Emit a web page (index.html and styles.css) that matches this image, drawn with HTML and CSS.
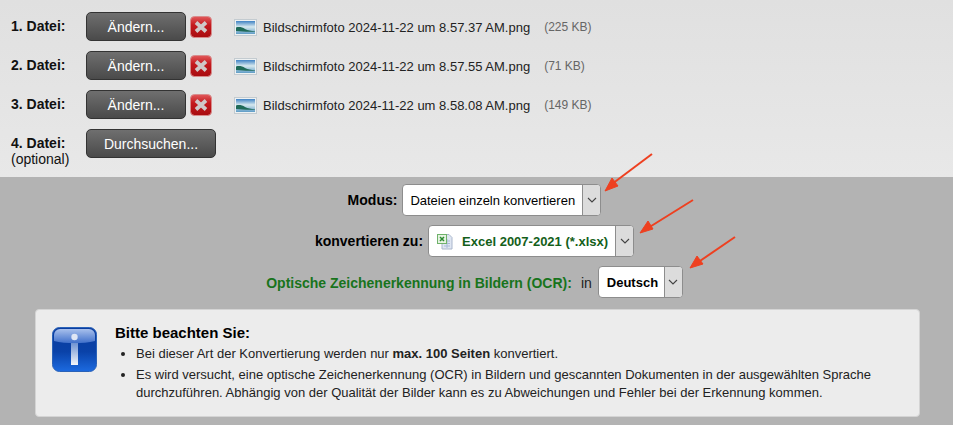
FILE: index.html
```html
<!DOCTYPE html>
<html lang="de">
<head>
<meta charset="utf-8">
<title>Datei-Konvertierung</title>
<link rel="stylesheet" href="styles.css">
</head>
<body>
<svg class="defs" width="0" height="0" aria-hidden="true">
  <defs>
    <linearGradient id="redg" x1="0" y1="0" x2="0" y2="1">
      <stop offset="0" stop-color="#e25a5c"/><stop offset=".4" stop-color="#c41a1e"/><stop offset="1" stop-color="#a80c10"/>
    </linearGradient>
    <linearGradient id="sky" x1="0" y1="0" x2="0" y2="1">
      <stop offset="0" stop-color="#3f82c4"/><stop offset=".45" stop-color="#d6e8ee"/><stop offset="1" stop-color="#5f9cc6"/>
    </linearGradient>
    <linearGradient id="blue" x1="0" y1="0" x2="0" y2="1">
      <stop offset="0" stop-color="#0a3c9e"/><stop offset=".55" stop-color="#0a42a8"/><stop offset="1" stop-color="#1c6ae0"/>
    </linearGradient>
    <linearGradient id="gloss" x1="0" y1="0" x2="0" y2="1">
      <stop offset="0" stop-color="#a8c0ec"/><stop offset="1" stop-color="#3f6fca"/>
    </linearGradient>
    <linearGradient id="ibar" x1="0" y1="0" x2="0" y2="1">
      <stop offset="0" stop-color="#6f93d2"/><stop offset="1" stop-color="#f4f6fa"/>
    </linearGradient>
    <symbol id="del" viewBox="0 0 22 22">
      <rect x=".5" y=".5" width="21" height="21" rx="4" fill="url(#redg)" stroke="#d88c8c"/>
      <path d="M6 6.500l10 9M16 6.500l-10 9" stroke="#cfc8c8" stroke-width="3.800"/>
    </symbol>
    <symbol id="pic" viewBox="0 0 23 17">
      <rect x=".5" y=".5" width="22" height="16" fill="#eef1f2" stroke="#c3cbd0"/>
      <rect x="2" y="2" width="19" height="13" fill="url(#sky)"/>
      <path d="M2 8.500c3-1 6-.5 9 1.500 3 1.500 6 2 10 2v.5c-6 .5-13 0-19-.5z" fill="#1f6a58"/>
    </symbol>
  </defs>
</svg>

<main class="page">
  <section class="files">
    <div class="file-row">
      <div class="file-label"><b>1. Datei:</b></div>
      <button class="btn btn-change" type="button">Ändern...</button>
      <svg class="del"><use href="#del"/></svg>
      <svg class="pic"><use href="#pic"/></svg>
      <span class="fname">Bildschirmfoto 2024-11-22 um 8.57.37 AM.png</span>
      <span class="fsize">(225 KB)</span>
    </div>
    <div class="file-row">
      <div class="file-label"><b>2. Datei:</b></div>
      <button class="btn btn-change" type="button">Ändern...</button>
      <svg class="del"><use href="#del"/></svg>
      <svg class="pic"><use href="#pic"/></svg>
      <span class="fname">Bildschirmfoto 2024-11-22 um 8.57.55 AM.png</span>
      <span class="fsize">(71 KB)</span>
    </div>
    <div class="file-row">
      <div class="file-label"><b>3. Datei:</b></div>
      <button class="btn btn-change" type="button">Ändern...</button>
      <svg class="del"><use href="#del"/></svg>
      <svg class="pic"><use href="#pic"/></svg>
      <span class="fname">Bildschirmfoto 2024-11-22 um 8.58.08 AM.png</span>
      <span class="fsize">(149 KB)</span>
    </div>
    <div class="file-row">
      <div class="file-label"><b>4. Datei:</b><br>(optional)</div>
      <button class="btn btn-browse" type="button">Durchsuchen...</button>
    </div>
  </section>

  <section class="options">
    <div class="opt-row">
      <span class="opt-label">Modus:</span>
      <div class="select select-mode">
        <span class="select-value">Dateien einzeln konvertieren</span>
        <span class="select-arrow"><svg width="10" height="6" viewBox="0 0 10 6"><path d="M1 1l4 4 4-4" fill="none" stroke="#444" stroke-width="1.100"/></svg></span>
      </div>
    </div>
    <div class="opt-row">
      <span class="opt-label">konvertieren zu:</span>
      <div class="select select-format">
        <span class="select-value">
          <svg class="xls" width="16" height="17" viewBox="0 0 16 17">
            <path d="M5 1.500h7l3 3v11.500H5z" fill="#dfe6f2" stroke="#aab7cc"/>
            <path d="M7 8h6M7 10.500h6M7 13h6M10 6v9" stroke="#a9bbd8"/>
            <rect x=".5" y="1.500" width="9" height="9" fill="#e6f3e2" stroke="#6fb26a"/>
            <path d="M3 4l4 4M7 4l-4 4" stroke="#2c8a33" stroke-width="1.500"/>
          </svg>
          <b class="green-dark">Excel 2007-2021 (*.xlsx)</b>
        </span>
        <span class="select-arrow"><svg width="10" height="6" viewBox="0 0 10 6"><path d="M1 1l4 4 4-4" fill="none" stroke="#444" stroke-width="1.100"/></svg></span>
      </div>
    </div>
    <div class="opt-row opt-row-ocr">
      <b class="ocr-label">Optische Zeichenerkennung in Bildern (OCR):</b>
      <span class="ocr-in">in</span>
      <div class="select select-lang">
        <span class="select-value"><b>Deutsch</b></span>
        <span class="select-arrow"><svg width="10" height="6" viewBox="0 0 10 6"><path d="M1 1l4 4 4-4" fill="none" stroke="#444" stroke-width="1.100"/></svg></span>
      </div>
    </div>

    <aside class="notice">
      <svg class="info" width="45" height="45" viewBox="0 0 45 45">
        <rect x=".5" y=".5" width="44" height="44" rx="7" fill="url(#blue)" stroke="#2a62b8"/>
        <path d="M2 8a6 6 0 0 1 6-6h29a6 6 0 0 1 6 6v6c-12 3-29 3-41 0z" fill="url(#gloss)"/>
        <circle cx="22.500" cy="10" r="3.200" fill="#dfe6f4"/>
        <rect x="19" y="16" width="7" height="22" fill="url(#ibar)"/>
      </svg>
      <div class="notice-body">
        <h2 class="notice-title">Bitte beachten Sie:</h2>
        <ul class="notice-list">
          <li>Bei dieser Art der Konvertierung werden nur <b>max. 100 Seiten</b> konvertiert.</li>
          <li>Es wird versucht, eine optische Zeichenerkennung (OCR) in Bildern und gescannten Dokumenten in der ausgewählten Sprache durchzuführen. Abhängig von der Qualität der Bilder kann es zu Abweichungen und Fehler bei der Erkennung kommen.</li>
        </ul>
      </div>
    </aside>

    <svg class="arrows" width="953" height="425" viewBox="0 0 953 425" aria-hidden="true">
      <g fill="#ee4020" stroke="#ee4020">
        <path d="M652 154L612 184" stroke-width="2" fill="none"/>
        <path d="M605 191l7-13 6 8z" stroke-width="1"/>
        <path d="M693 200L648 228" stroke-width="2" fill="none"/>
        <path d="M640 233l8-12 5 8z" stroke-width="1"/>
        <path d="M735 237L697 263" stroke-width="2" fill="none"/>
        <path d="M690 268l7-12 6 8z" stroke-width="1"/>
      </g>
    </svg>
  </section>
</main>
</body>
</html>
```
FILE: styles.css
```css
* { box-sizing: border-box; }
html, body { margin: 0; padding: 0; }
body {
  width: 953px;
  height: 425px;
  overflow: hidden;
  background: #b3b3b3;
  color: #000;
  font-family: "Liberation Sans", Arial, sans-serif;
  font-size: 13px;
}
.defs { position: absolute; }
.page { display: flex; flex-direction: column; height: 425px; }

.files {
  height: 177px;
  padding: 12px 0 0 11px;
  background: linear-gradient(#e0e0e0, #e8e8e8);
}
.file-row {
  display: flex;
  align-items: flex-start;
  height: 29px;
  margin-bottom: 10px;
}
.file-label {
  width: 75px;
  padding-top: 6px;
  font-size: 14px;
  line-height: 16px;
  color: #111;
}
.btn {
  height: 29px;
  padding: 2px 0 0;
  border: 1px solid #333;
  border-radius: 5px;
  background: linear-gradient(#6f6f6f, #4a4a4a);
  color: #fff;
  font: 14px "Liberation Sans", Arial, sans-serif;
  line-height: 23px;
}
.btn-change { width: 100px; }
.btn-browse { width: 130px; }
.del { width: 22px; height: 22px; margin: 4px 0 0 4px; }
.pic { width: 23px; height: 17px; margin: 7px 0 0 22px; }
.fname { margin: 8px 0 0 6px; line-height: 15px; color: #222; }
.fsize { margin: 8px 0 0 14px; line-height: 15px; font-size: 12px; color: #666; }

.options { position: relative; flex: 1; padding-top: 7px; }
.opt-row {
  display: flex;
  justify-content: center;
  align-items: center;
  gap: 5px;
  height: 32px;
  margin-bottom: 9px;
  padding-right: 4px;
  font-weight: bold;
}
.opt-label { font-size: 14px; }
.select {
  display: flex;
  height: 32px;
  border: 1px solid #8d8d8d;
  border-radius: 4px;
  background: #fff;
  font-weight: normal;
  overflow: hidden;
}
.select-value {
  flex: 1;
  display: flex;
  align-items: center;
  padding-left: 7px;
  white-space: nowrap;
}
.select-arrow {
  width: 18px;
  display: flex;
  align-items: center;
  justify-content: center;
  border-left: 1px solid #8d8d8d;
  background: #dcdcdc;
}
.select-mode { width: 199px; }
.select-format { width: 206px; }
.select-format .select-value { padding: 1px 0 0 8px; gap: 9px; }
.select-lang { width: 85px; }
.select-lang .select-value { padding: 1px 0 0 8px; }
.green-dark { color: #14601a; }
.opt-row-ocr { gap: 0; margin-bottom: 11px; }
.ocr-label { padding-top: 1px; color: #18741c; font-size: 14px; }
.ocr-in { margin: 0 6px 0 9px; padding-top: 1px; font-size: 14px; font-weight: normal; color: #222; }

.notice {
  display: flex;
  width: 885px;
  height: 108px;
  margin-left: 35px;
  padding: 17px 0 0 16px;
  border: 1px solid #d4d4d4;
  border-radius: 4px;
  background: #ececec;
}
.info { flex: none; }
.notice-body { margin-left: 18px; margin-top: -3px; flex: 1; }
.notice-title { margin: 0 0 4px; font-size: 15px; line-height: 17px; font-weight: bold; }
.notice-list {
  margin: 0;
  padding: 0 30px 0 21px;
  font-size: 13px;
  line-height: 18px;
  color: #222;
}
.notice-list li { margin-bottom: 3px; }
.arrows { position: absolute; left: 0; top: -177px; pointer-events: none; }
```
